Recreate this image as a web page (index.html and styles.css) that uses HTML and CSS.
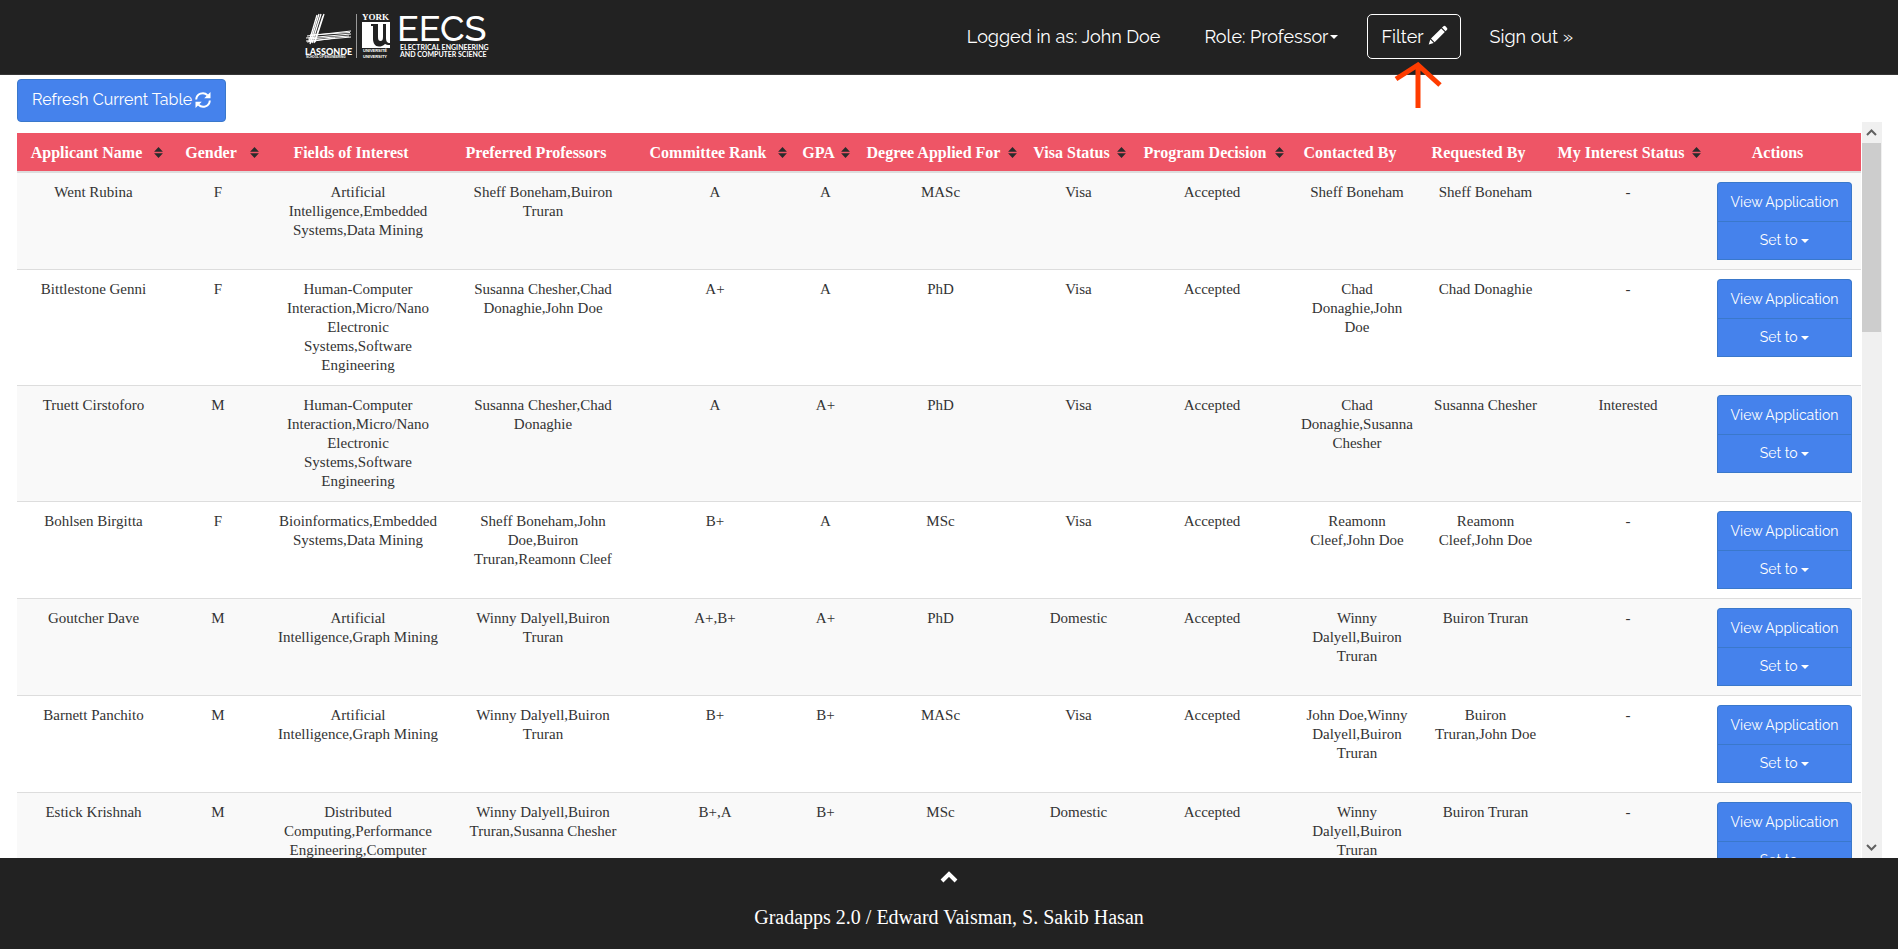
FILE: index.html
```html
<!DOCTYPE html>
<html lang="en">
<head>
<meta charset="utf-8">
<title>Gradapps 2.0</title>
<link rel="stylesheet" href="styles.css">
</head>
<body>
<svg class="defs" aria-hidden="true">
  <symbol id="sort" viewBox="0 0 8 10"><path d="M4 0L8 4.400H0ZM0 5.600H8L4 10Z"/></symbol>
  <symbol id="caret" viewBox="0 0 8 4"><path d="M0 0H8L4 4Z"/></symbol>
</svg>
<header class="topbar">
  <div class="topbar-inner">
    <a class="brand" href="#" aria-label="Lassonde York University EECS">
      <svg class="logo" width="186" height="48" viewBox="0 0 186 48">
        <g stroke="#fff" fill="none">
          <path d="M12 2L4 29M14 1L5 31M16 1L7 30M18 3L9 30M19 1L10 29" stroke-width="1.300"/>
          <path d="M2 23L46 18M5 22L45 19.500M1 25L46 21M3 26L44 23M1 28L46 24M2 29L30 25" stroke-width="1"/>
        </g>
        <text class="logo-name" x="0" y="42">LASSONDE</text>
        <text class="logo-school" x="1" y="45">SCHOOL OF ENGINEERING</text>
        <path d="M51.500 1V45" stroke="#999"/>
        <text class="logo-york" x="57" y="7">YORK</text>
        <path fill="#fff" d="M57 9H85V35H57Z"/>
        <path fill="#222" d="M66 11H73V24C73 27 74 28 75.500 28C77 28 78 27 78 24V11H81V25C81 28 82 30 85 30V32C82 32 81 31.500 80 31C78 33 76 33.500 74 33.500C70 33.500 68 30 68 26V13H66Z"/>
        <text class="logo-tiny" x="58" y="39">UNIVERSITÉ</text>
        <text class="logo-tiny" x="58" y="45">UNIVERSITY</text>
        <text class="logo-eecs" x="92" y="28">EECS</text>
        <text class="logo-sub" x="95" y="37">ELECTRICAL ENGINEERING</text>
        <text class="logo-sub" x="95" y="44">AND COMPUTER SCIENCE</text>
      </svg>
    </a>
    <nav class="nav">
      <span class="nav-item">Logged in as: John Doe</span>
      <button class="nav-item role" type="button">Role: Professor<svg class="caret" width="8" height="4"><use href="#caret"/></svg></button>
      <div class="filter-wrap">
        <button class="nav-item filter" type="button">Filter
          <svg class="pencil" width="20" height="20" viewBox="0 0 20 20" fill="#fff"><path d="M15.500 1.200Q16.500.300 17.500 1.300L19 2.900Q19.900 3.900 19 4.800L17.600 6.200L14 2.600ZM13.200 3.400L16.800 7L6.600 17.200L3 13.600ZM2.300 14.600L5.700 18L.700 19.500Z"/></svg>
        </button>
        <svg class="pointer" width="48" height="47" viewBox="0 0 48 47" fill="none" stroke="#ff3c00" stroke-width="5"><path d="M24 46V2M2 17L24 3L46 23"/></svg>
      </div>
      <a class="nav-item" href="#">Sign out »</a>
    </nav>
  </div>
</header>
<main class="main">
  <button class="btn refresh" type="button">Refresh Current Table
    <svg width="16" height="16" viewBox="0 0 16 16"><g fill="none" stroke="#fff" stroke-width="2"><path d="M1.200 7.500A6.600 6.600 0 0 1 12.500 3.200M14.800 8.500A6.600 6.600 0 0 1 3.500 12.800"/></g><path fill="#fff" d="M15.500 0V6.300H9.200ZM.500 16V9.700H6.800Z"/></svg>
  </button>
  <div class="pane">
    <div class="pane-body">
      <table class="grid">
        <colgroup><col class="c-name"><col class="c-gender"><col class="c-fields"><col class="c-prof"><col class="c-rank"><col class="c-gpa"><col class="c-degree"><col class="c-visa"><col class="c-decision"><col class="c-contacted"><col class="c-requested"><col class="c-status"><col class="c-actions"></colgroup>
        <thead>
          <tr>
            <th>Applicant Name<svg class="sort"><use href="#sort"/></svg></th>
            <th>Gender<svg class="sort"><use href="#sort"/></svg></th>
            <th>Fields of Interest</th>
            <th>Preferred Professors</th>
            <th>Committee Rank<svg class="sort"><use href="#sort"/></svg></th>
            <th>GPA<svg class="sort"><use href="#sort"/></svg></th>
            <th>Degree Applied For<svg class="sort"><use href="#sort"/></svg></th>
            <th>Visa Status<svg class="sort"><use href="#sort"/></svg></th>
            <th>Program Decision<svg class="sort"><use href="#sort"/></svg></th>
            <th>Contacted By</th>
            <th>Requested By</th>
            <th>My Interest Status<svg class="sort"><use href="#sort"/></svg></th>
            <th>Actions</th>
          </tr>
        </thead>
        <tbody>
          <tr><td>Went Rubina</td><td>F</td><td>Artificial Intelligence,Embedded Systems,Data Mining</td><td>Sheff Boneham,Buiron Truran</td><td>A</td><td>A</td><td>MASc</td><td>Visa</td><td>Accepted</td><td>Sheff Boneham</td><td>Sheff Boneham</td><td>-</td><td><div class="actions"><button class="btn" type="button">View Application</button><button class="btn" type="button">Set to <svg class="caret" width="8" height="4"><use href="#caret"/></svg></button></div></td></tr>
          <tr class="tall"><td>Bittlestone Genni</td><td>F</td><td>Human-Computer Interaction,Micro/Nano Electronic Systems,Software Engineering</td><td>Susanna Chesher,Chad Donaghie,John Doe</td><td>A+</td><td>A</td><td>PhD</td><td>Visa</td><td>Accepted</td><td>Chad Donaghie,John Doe</td><td>Chad Donaghie</td><td>-</td><td><div class="actions"><button class="btn" type="button">View Application</button><button class="btn" type="button">Set to <svg class="caret" width="8" height="4"><use href="#caret"/></svg></button></div></td></tr>
          <tr class="tall"><td>Truett Cirstoforo</td><td>M</td><td>Human-Computer Interaction,Micro/Nano Electronic Systems,Software Engineering</td><td>Susanna Chesher,Chad Donaghie</td><td>A</td><td>A+</td><td>PhD</td><td>Visa</td><td>Accepted</td><td>Chad Donaghie,Susanna Chesher</td><td>Susanna Chesher</td><td>Interested</td><td><div class="actions"><button class="btn" type="button">View Application</button><button class="btn" type="button">Set to <svg class="caret" width="8" height="4"><use href="#caret"/></svg></button></div></td></tr>
          <tr><td>Bohlsen Birgitta</td><td>F</td><td>Bioinformatics,Embedded Systems,Data Mining</td><td>Sheff Boneham,John Doe,Buiron Truran,Reamonn Cleef</td><td>B+</td><td>A</td><td>MSc</td><td>Visa</td><td>Accepted</td><td>Reamonn Cleef,John Doe</td><td>Reamonn Cleef,John Doe</td><td>-</td><td><div class="actions"><button class="btn" type="button">View Application</button><button class="btn" type="button">Set to <svg class="caret" width="8" height="4"><use href="#caret"/></svg></button></div></td></tr>
          <tr><td>Goutcher Dave</td><td>M</td><td>Artificial Intelligence,Graph Mining</td><td>Winny Dalyell,Buiron Truran</td><td>A+,B+</td><td>A+</td><td>PhD</td><td>Domestic</td><td>Accepted</td><td>Winny Dalyell,Buiron Truran</td><td>Buiron Truran</td><td>-</td><td><div class="actions"><button class="btn" type="button">View Application</button><button class="btn" type="button">Set to <svg class="caret" width="8" height="4"><use href="#caret"/></svg></button></div></td></tr>
          <tr><td>Barnett Panchito</td><td>M</td><td>Artificial Intelligence,Graph Mining</td><td>Winny Dalyell,Buiron Truran</td><td>B+</td><td>B+</td><td>MASc</td><td>Visa</td><td>Accepted</td><td>John Doe,Winny Dalyell,Buiron Truran</td><td>Buiron Truran,John Doe</td><td>-</td><td><div class="actions"><button class="btn" type="button">View Application</button><button class="btn" type="button">Set to <svg class="caret" width="8" height="4"><use href="#caret"/></svg></button></div></td></tr>
          <tr><td>Estick Krishnah</td><td>M</td><td>Distributed Computing,Performance Engineering,Computer</td><td>Winny Dalyell,Buiron Truran,Susanna Chesher</td><td>B+,A</td><td>B+</td><td>MSc</td><td>Domestic</td><td>Accepted</td><td>Winny Dalyell,Buiron Truran</td><td>Buiron Truran</td><td>-</td><td><div class="actions"><button class="btn" type="button">View Application</button><button class="btn" type="button">Set to <svg class="caret" width="8" height="4"><use href="#caret"/></svg></button></div></td></tr>
        </tbody>
      </table>
    </div>
    <div class="scrollbar" aria-hidden="true">
      <svg class="step" width="20" height="21" viewBox="0 0 20 21"><path d="M5 13L9.500 8.500L14 13"/></svg>
      <div class="track"><div class="thumb"></div></div>
      <svg class="step" width="20" height="21" viewBox="0 0 20 21"><path d="M5 8L9.500 12.500L14 8"/></svg>
    </div>
  </div>
</main>
<footer class="footer">
  <a class="up" href="#" aria-label="Expand footer"><svg width="18" height="12" viewBox="0 0 18 12" fill="none" stroke="#fff" stroke-width="4"><path d="M2 10L9 3L16 10"/></svg></a>
  <p class="credits">Gradapps 2.0 / Edward Vaisman, S. Sakib Hasan</p>
</footer>
</body>
</html>
```
FILE: styles.css
```css
* { box-sizing: border-box; }

body {
  margin: 0;
  height: 100vh;
  display: flex;
  flex-direction: column;
  overflow: hidden;
  background: #fff;
  color: #333;
  font: 15px/19px Georgia, "Liberation Serif", serif;
}

button { font: inherit; color: inherit; cursor: pointer; }

.defs { position: absolute; width: 0; height: 0; }

.topbar {
  flex: none;
  background: #222;
  border-bottom: 1px solid #363636;
  color: #fff;
}

.topbar-inner {
  max-width: 1288px;
  height: 74px;
  margin: 0 auto;
  padding-bottom: 1px;
  display: flex;
  align-items: center;
  justify-content: space-between;
}

.logo { display: block; overflow: visible; fill: #fff; font-family: Lato, sans-serif; }
.logo-name { font-size: 9px; font-weight: 900; }
.logo-school { font: 700 3px "Liberation Sans", sans-serif; }
.logo-tiny { font: 700 4px "Liberation Sans", sans-serif; }
.logo-york { font: 700 9px "Liberation Serif", serif; }
.logo-eecs { font: 500 36px Raleway, Lato, sans-serif; }
.logo-sub { font-size: 7px; font-weight: 700; }

.nav {
  display: flex;
  align-items: center;
  gap: 14px;
  padding-right: 5px;
  font: 18px/24px Raleway, Lato, sans-serif;
}

.nav-item {
  display: flex;
  align-items: center;
  height: 45px;
  padding: 0 15px;
  border: 0;
  background: none;
  color: #fff;
  text-decoration: none;
}

.role { gap: 2px; }
.filter-wrap { position: relative; }
.filter { padding: 0 12px 0 13px; gap: 4px; border: 1px solid #fff; border-radius: 5px; }
.pencil { margin-bottom: 4px; }
.pointer { position: absolute; top: 48px; left: 27px; }

.caret { fill: #fff; vertical-align: middle; }

.main {
  flex: 1;
  min-height: 0;
  display: flex;
  flex-direction: column;
  align-items: flex-start;
  padding: 4px 16px 0 17px;
}

.btn {
  background: #4582ec;
  border: 1px solid #3a78cb;
  color: #fff;
  font: 14px/20px Raleway, Lato, sans-serif;
}

.refresh {
  flex: none;
  display: flex;
  align-items: center;
  gap: 3px;
  height: 43px;
  padding: 0 14px 1px;
  border-radius: 4px;
  font-size: 16px;
}

.pane { flex: 1; min-height: 0; width: 100%; display: flex; }
.pane-body { flex: 1; min-width: 0; overflow: hidden; padding-top: 11px; }

.grid {
  width: 100%;
  table-layout: fixed;
  border-collapse: separate;
  border-spacing: 0;
  text-align: center;
}

.c-name { width: 153px; }
.c-gender { width: 96px; }
.c-fields { width: 184px; }
.c-prof { width: 186px; }
.c-rank { width: 158px; }
.c-gpa { width: 63px; }
.c-degree { width: 167px; }
.c-visa { width: 109px; }
.c-decision { width: 158px; }
.c-contacted { width: 132px; }
.c-requested { width: 125px; }
.c-status { width: 160px; }
.c-actions { width: 153px; }

.grid th {
  position: relative;
  height: 40px;
  padding: 0 22px 0 8px;
  background: #ee5566;
  border-bottom: 2px solid #ddd;
  color: #fff;
  font-size: 16px;
  font-weight: 700;
  white-space: nowrap;
}

.sort {
  position: absolute;
  top: 14px;
  right: 7px;
  width: 9px;
  height: 11px;
  fill: #292b2c;
}

.grid td {
  padding: 10px 9px 8px;
  border-bottom: 1px solid #ddd;
  vertical-align: top;
}

.grid td:last-child { padding: 9px; }

.grid tbody tr:nth-child(odd) { background: #f9f9f9; }
.tall { height: 116px; }

.actions { display: flex; flex-direction: column; }
.actions .btn { height: 39px; padding: 0 0 1px; }
.actions .btn:first-child { border-radius: 4px 4px 0 0; border-bottom: 0; }

.scrollbar {
  flex: none;
  width: 20px;
  margin-left: 1px;
  display: flex;
  flex-direction: column;
  background: #f0f0f0;
}
.step { flex: none; fill: none; stroke: #606060; stroke-width: 2; }
.track { flex: 1; }
.thumb { width: 19px; height: 189px; background: #cdcdcd; }

.footer {
  flex: none;
  height: 91px;
  display: flex;
  flex-direction: column;
  align-items: center;
  gap: 22px;
  padding-top: 13px;
  background: #222;
  color: #fff;
}
.up { display: flex; }
.credits { margin: 0; font-size: 20px; line-height: 24px; }
```
